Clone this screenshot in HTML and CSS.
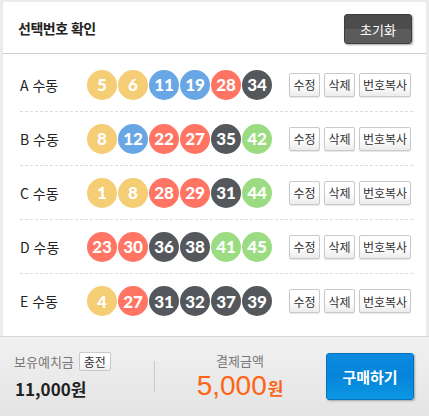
FILE: index.html
```html
<!DOCTYPE html>
<html lang="ko">
<head>
  <meta charset="UTF-8" />
  <title>선택번호 확인</title>
  <link rel="stylesheet" href="styles.css">
</head>
<body>
  <div class="panel">
    <div class="head">
      <h3 class="title">선택번호 확인</h3>
      <button class="btn-reset">초기화</button>
    </div>

    <ul class="picks">
      <li class="pick">
        <span class="pick-name">A 수동</span>
        <span class="balls">
          <i class="ball y">5</i><i class="ball y">6</i><i class="ball b">11</i><i class="ball b">19</i><i class="ball r">28</i><i class="ball d">34</i>
        </span>
        <span class="acts"><button class="btn-s">수정</button><button class="btn-s">삭제</button><button class="btn-s">번호복사</button></span>
      </li>
      <li class="pick">
        <span class="pick-name">B 수동</span>
        <span class="balls">
          <i class="ball y">8</i><i class="ball b">12</i><i class="ball r">22</i><i class="ball r">27</i><i class="ball d">35</i><i class="ball g">42</i>
        </span>
        <span class="acts"><button class="btn-s">수정</button><button class="btn-s">삭제</button><button class="btn-s">번호복사</button></span>
      </li>
      <li class="pick">
        <span class="pick-name">C 수동</span>
        <span class="balls">
          <i class="ball y">1</i><i class="ball y">8</i><i class="ball r">28</i><i class="ball r">29</i><i class="ball d">31</i><i class="ball g">44</i>
        </span>
        <span class="acts"><button class="btn-s">수정</button><button class="btn-s">삭제</button><button class="btn-s">번호복사</button></span>
      </li>
      <li class="pick">
        <span class="pick-name">D 수동</span>
        <span class="balls">
          <i class="ball r">23</i><i class="ball r">30</i><i class="ball d">36</i><i class="ball d">38</i><i class="ball g">41</i><i class="ball g">45</i>
        </span>
        <span class="acts"><button class="btn-s">수정</button><button class="btn-s">삭제</button><button class="btn-s">번호복사</button></span>
      </li>
      <li class="pick">
        <span class="pick-name">E 수동</span>
        <span class="balls">
          <i class="ball y">4</i><i class="ball r">27</i><i class="ball d">31</i><i class="ball d">32</i><i class="ball d">37</i><i class="ball d">39</i>
        </span>
        <span class="acts"><button class="btn-s">수정</button><button class="btn-s">삭제</button><button class="btn-s">번호복사</button></span>
      </li>
    </ul>
  </div>

  <div class="foot">
    <div class="deposit">
      <div class="deposit-top">보유예치금 <button class="btn-charge">충전</button></div>
      <div class="deposit-amt">11,000원</div>
    </div>
    <div class="pay">
      <div class="pay-label">결제금액</div>
      <div class="pay-amt">5,000<span class="won">원</span></div>
    </div>
    <button class="btn-buy">구매하기</button>
  </div>
</body>
</html>
```

FILE: styles.css
```css
* {
  box-sizing: border-box;
}

body {
  margin: 0;
  width: 429px;
  height: 416px;
  overflow: hidden;
  background: #ebebeb;
  font-family: "Noto Sans CJK KR", "Noto Sans", sans-serif;
  color: #222;
}

.panel {
  margin: 2px 3px 0 3px;
  background: #fff;
  height: 334px;
}

.head {
  height: 52px;
  border-bottom: 1px solid #cfcfcf;
  display: flex;
  align-items: center;
  justify-content: space-between;
  padding: 0 14px 0 15px;
}

.title {
  margin: 0;
  font-size: 14px;
  font-weight: bold;
  color: #222;
  letter-spacing: -0.5px;
}

.btn-reset {
  width: 68px;
  height: 30px;
  margin-top: 3px;
  border: 1px solid #3e3e3e;
  border-radius: 3px;
  background: linear-gradient(#4c4c4c 0%, #4c4c4c 50%, #5c5c5c 51%, #5a5a5a 100%);
  color: #fff;
  font-family: inherit;
  font-size: 13px;
  box-shadow: 1px 1px 2px rgba(0, 0, 0, 0.35);
}

.picks {
  list-style: none;
  margin: 0;
  padding: 4px 13px 0 17px;
}

.pick {
  height: 54px;
  display: flex;
  align-items: center;
  border-bottom: 1px dashed #ddd;
}

.pick:last-child {
  border-bottom: none;
}

.pick-name {
  flex-shrink: 0;
  width: 67px;
  font-size: 14px;
  color: #222;
}

.balls {
  flex-shrink: 0;
  display: flex;
  width: 202px;
}

.ball {
  width: 30px;
  height: 30px;
  margin-right: 1px;
  border-radius: 50%;
  display: flex;
  align-items: center;
  justify-content: center;
  font-style: normal;
  font-family: Lato, "Open Sans", sans-serif;
  font-weight: 900;
  font-size: 17px;
  color: #fff;
}

.ball.y { background: #f4cd74; }
.ball.b { background: #69a6e6; }
.ball.r { background: #ff7463; }
.ball.d { background: #54575b; }
.ball.g { background: #9bdc82; }

.acts {
  display: flex;
  gap: 4px;
}

.btn-s {
  height: 24px;
  padding: 0 3px;
  min-width: 31px;
  white-space: nowrap;
  border: 1px solid #c9c9c9;
  border-radius: 2px;
  background: linear-gradient(#fff 0%, #fff 50%, #ececec 100%);
  box-shadow: 0 1px 1px rgba(0, 0, 0, 0.1);
  font-family: inherit;
  font-size: 12px;
  color: #333;
}

.foot {
  height: 80px;
  border-top: 1px solid #d6d6d6;
  background: linear-gradient(#f1f1f1, #e4e4e4);
  display: flex;
  align-items: center;
  padding: 0 15px 0 14px;
}

.deposit {
  width: 141px;
  height: 31px;
  border-right: 1px solid #cacaca;
  position: relative;
}

.deposit-top {
  position: absolute;
  top: -9px;
  left: 0;
  display: flex;
  align-items: center;
  gap: 5px;
  font-size: 13px;
  color: #777;
  white-space: nowrap;
}

.btn-charge {
  height: 19px;
  padding: 0 4px;
  border: 1px solid #c9c9c9;
  border-radius: 2px;
  background: linear-gradient(#fff 0%, #fff 50%, #eee 100%);
  font-family: inherit;
  font-size: 12px;
  color: #333;
  line-height: 1;
}

.deposit-amt {
  position: absolute;
  top: 15px;
  left: 1px;
  font-size: 17px;
  font-weight: bold;
  line-height: 25px;
  color: #222;
  white-space: nowrap;
}

.pay {
  width: 170px;
  text-align: center;
  padding-top: 2px;
}

.pay-label {
  font-size: 13px;
  color: #777;
  line-height: 18px;
}

.pay-amt {
  font-family: "Liberation Sans", sans-serif;
  font-size: 28px;
  color: #ff6415;
  line-height: 32px;
}

.won {
  font-family: "Noto Sans CJK KR", sans-serif;
  font-size: 17px;
  font-weight: bold;
  margin-left: 1px;
}

.btn-buy {
  margin-left: auto;
  width: 88px;
  height: 47px;
  border: 1px solid #0672bd;
  border-radius: 3px;
  background: linear-gradient(#0b8ae0 0%, #0585da 50%, #0b97e3 100%);
  box-shadow: 1px 1px 2px rgba(0, 0, 0, 0.3);
  color: #fff;
  font-family: inherit;
  font-size: 15px;
  font-weight: bold;
}
```
